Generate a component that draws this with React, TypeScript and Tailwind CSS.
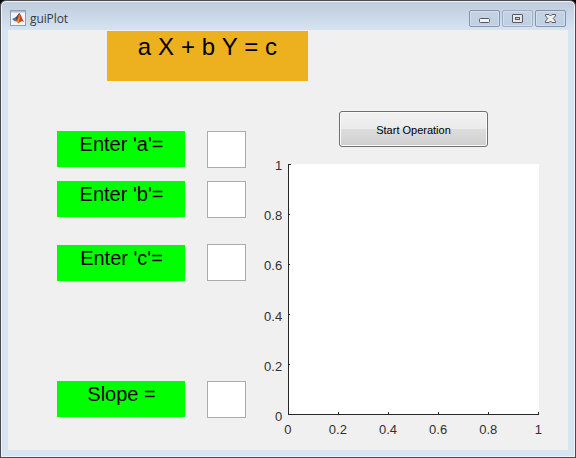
const ticks = [0, 0.2, 0.4, 0.6, 0.8, 1];

function MatlabIcon() {
  return (
    <svg width="16" height="16" viewBox="0 0 16 16" className="shrink-0">
      <rect x="0.5" y="0.5" width="15" height="15" fill="#f3f5f8" stroke="#8d9db2" />
      <rect x="1" y="1" width="14" height="1.5" fill="#a9bdd6" />
      <path d="M2 9 L5.5 7.2 L7.5 9.5 L5 11.4 Z" fill="#3f78b5" />
      <path d="M5.5 7.2 C7 6.8 8 3.8 9.2 3.2 L8 10 L6.5 10.5 Z" fill="#40466e" />
      <path d="M9.2 3 C11 4.2 12 9 14.4 12.2 C12.5 11 11 10.8 8.4 13.6 C7.8 12.2 7 11 5 11.4 C7.8 9.8 8 5.2 9.2 3 Z" fill="#c8401f" />
      <path d="M9.3 4 C10.2 6.4 9.9 10 8.4 13.3 C7.7 12 7.2 11.3 6.3 11.2 C8.4 9.6 8.7 6.5 9.3 4 Z" fill="#f08a2b" />
    </svg>
  );
}

function WindowButton({ kind }: { kind: "min" | "max" | "close" }) {
  return (
    <div
      className={
        "h-[17px] w-[31px] rounded-[2px] border bg-linear-to-b from-[#c5d3e3] to-[#bfcfe2] shadow-[inset_0_0_0_1px_#d0deed] " +
        (kind === "max" ? "border-[#9fafc4]" : "border-[#8593b1]")
      }
    >
      <svg width="29" height="15" viewBox="0 0 29 15" className="block">
        {kind === "min" && (
          <rect x="9.5" y="7.5" width="10" height="4" rx="1" fill="#f5f3f1" stroke="#545867" />
        )}
        {kind === "max" && (
          <>
            <rect x="9.5" y="3.5" width="10" height="8" rx="0.5" fill="#e9e6e6" stroke="#545867" />
            <rect x="12.5" y="6.5" width="4" height="2" fill="#c1cee0" stroke="#545867" />
          </>
        )}
        {kind === "close" && (
          <path
            d="M9.5 3.5 H13 L14.5 5 L16 3.5 H19.5 V4.8 L17.3 7.5 L19.5 10.2 V11.5 H16 L14.5 10 L13 11.5 H9.5 V10.2 L11.7 7.5 L9.5 4.8 Z"
            fill="#f1efed"
            stroke="#545867"
          />
        )}
      </svg>
    </div>
  );
}

function Field({ label, gap, raised }: { label: string; gap: string; raised?: boolean }) {
  return (
    <div className={"flex h-9 items-start gap-[22px] " + gap}>
      <div className="h-9 w-32 bg-[#00ff00] pt-[2px] pl-px text-center text-[20px] leading-[23px] whitespace-pre">
        {label}
      </div>
      <input
        aria-label={label}
        className={"h-[37px] w-[39px] shrink-0 border border-[#ababab] bg-white outline-none " + (raised ? "-mt-px" : "")}
      />
    </div>
  );
}

function Axes() {
  return (
    <svg width="305" height="290" viewBox="0 0 305 290" className="mt-2 block">
      <rect x="33" y="9" width="251" height="251" fill="#fff" />
      <g fill="#262626" shapeRendering="crispEdges">
        <rect x="33" y="9" width="1" height="251" />
        <rect x="33" y="259" width="251" height="1" />
        {ticks.map((t) => (
          <g key={t}>
            <rect x={33 + Math.round(t * 250)} y="257" width="1" height="3" />
            <rect x="33" y={259 - Math.round(t * 250)} width={t === 1 ? 3 : 2} height="1" />
          </g>
        ))}
      </g>
      <g fill="#303030" fontSize="13">
        {ticks.map((t) => (
          <g key={t}>
            <text x={32.8 + t * 250.5} y="279" textAnchor="middle">{t}</text>
            <text x="27.2" y={266 - Math.round(t * 251)} textAnchor="end">{t}</text>
          </g>
        ))}
      </g>
    </svg>
  );
}

export default function App() {
  return (
    <div className="h-[458px] w-[576px] overflow-hidden bg-black font-['Liberation_Sans',Arial,sans-serif] text-black">
      <div className="flex h-full flex-col rounded-t-[6px] border border-[#4b4a4f] bg-[#d7e4f2] bg-linear-to-b from-[#bdcbdc] via-[#d7e4f2] via-[30px] to-[#d7e4f2] px-[7px] pb-[7px] shadow-[inset_0_0_0_1px_#edf3fa]">
        <header className="flex h-[29px] shrink-0 items-start pt-[9px]">
          <div className="ml-[2px] flex">
            <MatlabIcon />
          </div>
          <span className="ml-1 font-['Open_Sans','Noto_Sans',sans-serif] text-[12px] leading-[17px] tracking-[-0.1px] text-[#353a42]">
            guiPlot
          </span>
          <div className="mr-[2px] ml-auto flex gap-[2px]">
            <WindowButton kind="min" />
            <WindowButton kind="max" />
            <WindowButton kind="close" />
          </div>
        </header>
        <main className="h-[420px] w-[560px] bg-[#f0f0f0] pt-px">
          <h1 className="ml-[99px] h-[50px] w-[201px] bg-[#edb120] pt-[2px] text-center text-[24px] leading-[28px] tracking-[0.12px]">
            a X + b Y = c
          </h1>
          <div className="flex">
            <section className="w-[247px] pt-[50px] pl-[49px]">
              <Field label="Enter 'a'=" gap="mb-[14px]" />
              <Field label="Enter 'b'=" gap="mb-7" />
              <Field label="Enter 'c'=" gap="mb-[100px]" raised />
              <Field label="Slope =" gap="" />
            </section>
            <section className="pt-[30px]">
              <button className="ml-[84px] block h-9 w-[149px] rounded-[3px] border border-[#707070] bg-linear-to-b from-[#f2f2f2] from-0% via-[#ebebeb] via-50% to-[#cfcfcf] bg-[linear-gradient(#f2f2f2,#ebebeb_49%,#dddddd_50%,#cfcfcf)] pt-[2px] text-[11px] shadow-[inset_0_0_0_1px_#fafafa]">
                Start Operation
              </button>
              <Axes />
            </section>
          </div>
        </main>
      </div>
    </div>
  );
}
